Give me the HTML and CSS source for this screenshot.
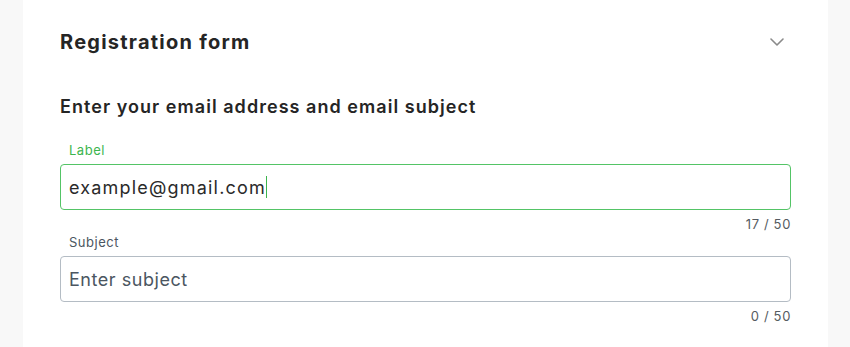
FILE: index.html
```html
<!DOCTYPE html>
<html lang="en">
<head>
<meta charset="utf-8">
<title>Registration form</title>
<link rel="stylesheet" href="styles.css">
</head>
<body>
<main class="card">
  <header class="card-header">
    <h1 class="title">Registration form</h1>
    <svg class="chevron" width="14" height="8" viewBox="0 0 14 8" aria-hidden="true">
      <path d="M1 1 L7 7 L13 1" fill="none" stroke="#8a8a8a" stroke-width="1.6" stroke-linecap="round" stroke-linejoin="round"/>
    </svg>
  </header>
  <h2 class="subtitle">Enter your email address and email subject</h2>
  <div class="field field-active">
    <label class="field-label" for="email">Label</label>
    <div class="field-box"><span class="field-value">example@gmail.com</span><span class="caret"></span></div>
    <div class="field-counter">17 / 50</div>
  </div>
  <div class="field">
    <label class="field-label" for="subject">Subject</label>
    <div class="field-box"><span class="field-placeholder">Enter subject</span></div>
    <div class="field-counter">0 / 50</div>
  </div>
</main>
</body>
</html>
```

FILE: styles.css
```css
html, body {
  margin: 0;
  padding: 0;
}
body {
  background: #f8f8f8;
  font-family: Inter, "Open Sans", sans-serif;
  letter-spacing: 0.06em;
  width: 850px;
  height: 347px;
  overflow: hidden;
}
.card {
  margin: 0 22px 0 23px;
  background: #ffffff;
  height: 347px;
  padding: 0 37px;
  box-sizing: border-box;
}
.card-header {
  height: 84px;
  display: flex;
  align-items: center;
  justify-content: space-between;
}
.title {
  margin: 0;
  font-size: 20px;
  font-weight: 700;
  color: #252525;
  line-height: 26px;
  letter-spacing: 0.062em;
}
.chevron {
  margin-right: 7px;
}
.subtitle {
  margin: 10px 0 0 0;
  font-size: 18px;
  font-weight: 600;
  color: #252525;
  line-height: 26px;
  letter-spacing: 0.058em;
}
.field {
  display: flex;
  flex-direction: column;
}
.field-active {
  margin-top: 21px;
}
.field-label {
  font-size: 13px;
  line-height: 18px;
  color: #4b5661;
  padding-left: 9px;
  margin-bottom: 5px;
  letter-spacing: 0.04em;
}
.field-active .field-label {
  color: #3cb54e;
}
.field-box {
  height: 46px;
  box-sizing: border-box;
  border: 1px solid #b4bcc4;
  border-radius: 4px;
  display: flex;
  align-items: center;
  padding-left: 8px;
  font-size: 18px;
  letter-spacing: 0.066em;
}
.field-active .field-box {
  border-color: #54c466;
}
.field-value {
  color: #2a2a2a;
}
.caret {
  width: 1px;
  height: 22px;
  background: #3cb54e;
}
.field-placeholder {
  color: #4b5661;
  letter-spacing: 0.03em;
}
.field-counter {
  align-self: flex-end;
  font-size: 13px;
  line-height: 18px;
  color: #555b61;
  margin-top: 5px;
  letter-spacing: 0.05em;
}
```
